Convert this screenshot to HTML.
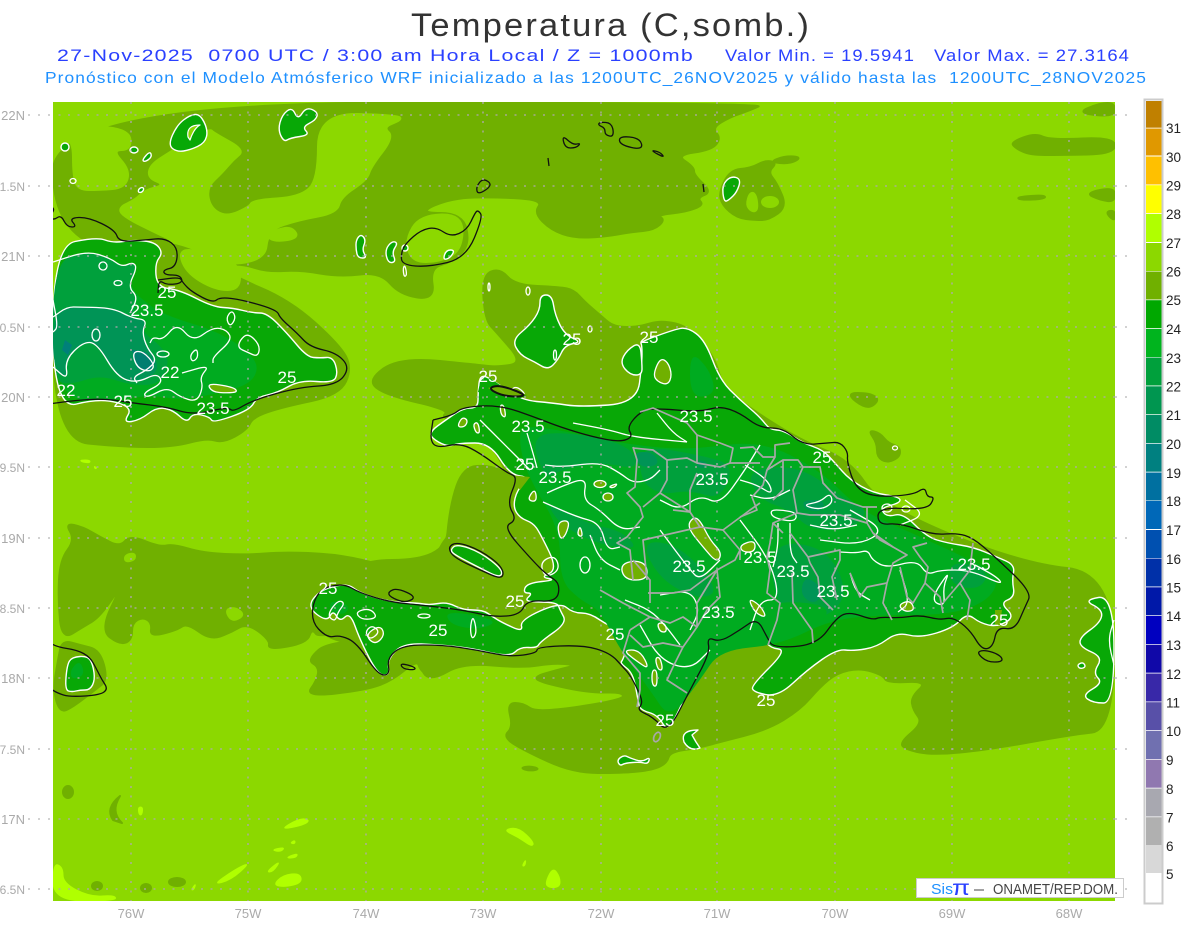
<!DOCTYPE html>
<html><head><meta charset="utf-8"><title>Temperatura</title>
<style>
html,body{margin:0;padding:0;background:#fff}
svg{display:block}
text{font-family:"Liberation Sans",sans-serif}
.d{fill:#70b000;stroke:#70b000;stroke-width:2;stroke-linejoin:round}
.l{fill:#8cd800;stroke:#8cd800;stroke-width:2;stroke-linejoin:round}
.b{fill:#b0ff00;stroke:#b0ff00;stroke-width:1;stroke-linejoin:round}
.g{fill:#08a806;stroke:#fff;stroke-width:1.4;stroke-linejoin:round}
.g2{fill:#00ab20;stroke:none}
.g3{fill:#00a03c;stroke:none}
.g4{fill:#009456;stroke:none}
.o{fill:#70b000;stroke:#fff;stroke-width:1.3;stroke-linejoin:round}
.w{fill:none;stroke:#fff;stroke-width:1.3;stroke-linejoin:round}
.k{fill:none;stroke:#111;stroke-width:1.3;stroke-linejoin:round}
.y{fill:none;stroke:#a8a8a8;stroke-width:1.7;stroke-linejoin:round}
.ax{font-size:13px;fill:#aaa}
.ax2{font-size:12px;fill:#aaa}
.cb{font-size:13.5px;fill:#222}
.lb{font-size:17px;fill:#fff;text-anchor:middle}
</style></head><body>
<svg width="1200" height="927" viewBox="0 0 1200 927" xmlns="http://www.w3.org/2000/svg">
<rect width="1200" height="927" fill="#fff"/>
<text x="411" y="36" font-size="32" fill="#333" letter-spacing="2" textLength="400" lengthAdjust="spacingAndGlyphs">Temperatura (C,somb.)</text>
<text x="57" y="61" font-size="17" fill="#2a40ff" letter-spacing="1" textLength="637" lengthAdjust="spacingAndGlyphs" xml:space="preserve">27-Nov-2025  0700 UTC / 3:00 am Hora Local / Z = 1000mb</text>
<text x="725" y="61" font-size="17" fill="#2a40ff" letter-spacing="1" textLength="190" lengthAdjust="spacingAndGlyphs">Valor Min. = 19.5941</text>
<text x="934" y="61" font-size="17" fill="#2a40ff" letter-spacing="1" textLength="196" lengthAdjust="spacingAndGlyphs">Valor Max. = 27.3164</text>
<text x="45" y="83" font-size="16" fill="#1e90ff" letter-spacing="1" textLength="1102" lengthAdjust="spacingAndGlyphs" xml:space="preserve">Pronóstico con el Modelo Atmósferico WRF inicializado a las 1200UTC_26NOV2025 y válido hasta las  1200UTC_28NOV2025</text>

<svg x="53" y="102" width="1062" height="799" viewBox="53 102 1062 799">
<rect x="53" y="102" width="1062" height="799" fill="#8cd800"/>
<!-- big northern dark -->
<polygon class="d" points="53,102 766,103 751,110 730,117 712,128 721,138 712,150 676,155 694,167 694,175 712,192 697,198 704,205 686,212 657,215 665,220 654,230 632,232 603,237 574,238 551,230 534,213 543,200 497,197 452,198 417,213 463,213 470,245 452,262 430,268 435,300 400,295 380,272 340,277 300,270 267,272 240,263 205,268 176,262 53,240"/>
<polygon class="l" points="53,102 78,102 92,115 88,125 130,130 131,150 112,150 130,170 125,188 100,190 78,190 73,175 73,140 57,135 53,135"/>
<polygon class="l" points="209,128 214,133 245,150 233,160 222,173 207,187 210,207 226,217 249,207 253,200 300,197 318,180 318,113 398,115 402,120 383,127 394,137 371,167 367,180 341,197 337,213 299,220 268,230 265,262 205,265 176,262 172,240 160,235 122,216 119,207 135,200 145,190 165,185 148,178 150,165 170,152"/>
<polygon class="l" points="265,235 290,225 300,238 275,242"/>
<polygon class="l" points="420,215 463,214 462,250 440,262 412,262 405,240"/>
<polygon class="d" points="719,192 730,170 751,168 766,160 777,163 768,172 777,183 787,207 769,220 755,220 737,218 722,205"/>
<polygon class="d" points="769,162 785,156 802,157 790,164"/>
<polygon class="l" points="750,192 756,194 758,210 752,212 746,205"/>
<ellipse cx="770" cy="202" rx="8" ry="5" class="l"/>
<polygon class="d" points="1011,142 1035,133 1050,140 1115,137 1115,154 1060,155 1030,155 1015,148"/>
<polygon class="d" points="1076,113 1100,103 1115,103 1115,117"/>
<polygon class="d" points="1085,193 1115,187 1115,202 1100,200"/>
<polygon class="d" points="1105,212 1115,210 1115,222"/>
<polygon class="d" points="1017,197 1045,195 1045,199 1020,200"/>
<!-- north of Hispaniola / Turks + south sea -->
<polygon class="d" points="482,275 500,268 515,285 560,287 574,290 585,302 600,315 614,327 639,327 661,320 690,327 715,358 722,385 745,405 800,440 850,460 880,505 1020,563 1114,573 1114,730 1070,735 987,750 933,755 907,750 899,743 923,723 913,710 911,697 928,681 887,683 883,675 860,668 837,673 820,687 800,710 767,730 720,742 698,748 670,752 667,763 653,770 623,773 573,773 523,750 503,737 513,727 507,703 523,703 537,713 623,700 623,692 590,693 543,683 533,677 557,670 577,665 553,663 523,668 463,663 433,680 420,672 430,650 300,640 340,560 445,560 450,505 463,467 490,465 510,475 480,430 440,418 450,410 385,395 367,380 400,357 480,365 497,367 523,363 497,333 485,320"/>
<polygon class="d" points="845,393 870,393 880,400 867,410"/>
<polygon class="d" points="868,430 880,433 888,443 900,447 900,457 887,463 877,457 877,443"/>
<!-- Cuba south dark -->
<polygon class="d" points="53,238 180,240 230,275 290,300 340,345 352,368 340,395 283,407 253,417 247,430 223,443 207,438 173,447 123,447 53,440"/>
<polygon class="l" points="178,247 215,255 240,265 240,290 215,290 185,272"/>
<!-- western big dark band -->
<polygon class="d" points="65,523 83,527 100,537 120,547 130,535 160,547 173,544 203,553 247,555 283,552 333,554 373,562 393,570 410,583 440,583 433,563 445,537 460,530 497,533 510,560 470,600 320,640 312,628 307,643 268,650 270,640 247,623 230,633 210,640 187,623 177,630 150,637 152,623 143,617 132,623 132,640 120,645 100,630 123,583 100,617 83,627 62,640 58,600 60,560 75,540"/>
<polygon class="l" points="225,610 235,607 245,615 232,622"/>
<polygon class="l" points="125,555 135,553 135,560 125,562"/>
<!-- Jamaica dark -->
<polygon class="d" points="62,640 80,645 100,650 108,680 95,690 73,707 60,713 53,690 58,660"/>
<!-- south Tiburon dark -->
<polygon class="d" points="307,660 319,667 317,680 305,697 367,690 393,680 417,660 420,670 433,680 460,660 500,665 440,640 330,640"/>
<!-- bottom spots -->
<ellipse cx="68" cy="792" rx="5" ry="6" class="d"/>
<path d="M120,796 Q105,808 113,820 L122,823 Q110,812 120,796Z" class="d"/>
<ellipse cx="97" cy="886" rx="5" ry="4" class="d"/>
<ellipse cx="177" cy="882" rx="8" ry="4" class="d"/>
<ellipse cx="146" cy="888" rx="5" ry="4" class="d"/>
<polygon class="d" points="520,768 530,766 540,769 530,771"/>
<!-- bright patches -->
<polygon class="b" points="279,830 300,818 310,820 304,825"/>
<polygon class="b" points="271,850 285,847 281,852"/>
<polygon class="b" points="285,858 298,853 296,858"/>
<polygon class="b" points="266,872 281,860 273,872"/>
<polygon class="b" points="212,885 239,867 250,863 231,880"/>
<polygon class="b" points="273,885 283,875 300,873 302,883 285,887"/>
<polygon class="b" points="503,830 518,827 534,842 532,847 518,837"/>
<polygon class="b" points="545,883 553,867 560,877 560,887 549,888"/>
<polygon class="b" points="53,863 63,867 63,883 90,897 115,895 116,901 53,901"/>
<polygon class="b" points="138,807 143,807 142,815 139,815"/>
<polygon class="b" points="191,890 196,883 194,890"/>
<polygon class="b" points="290,843 295,840 295,844"/>
<polygon class="b" points="522,866 526,859 525,866"/>
<polygon class="b" points="80,460 90,460 90,463 82,462"/>
<polygon class="b" points="94,466 97,468 95,469"/>
<!-- land 25 contour: Cuba -->
<polygon class="g" points="53,246 97,237 113,243 133,240 155,242 163,253 155,263 157,287 180,290 213,307 233,308 253,313 267,313 287,333 307,357 320,358 333,357 338,373 333,383 300,380 277,393 257,397 250,410 213,423 210,417 193,413 187,423 173,410 157,407 140,420 123,423 133,407 100,398 53,410"/>
<polygon class="g2" points="53,262 87,251 122,267 137,268 128,287 155,310 180,320 213,330 240,345 260,365 250,385 210,395 180,400 150,395 120,400 53,400"/>
<polygon class="g3" points="53,262 87,251 110,258 122,267 133,262 137,268 128,287 138,297 132,318 147,320 142,332 160,345 170,360 160,385 130,385 100,375 70,385 53,380"/>
<polygon class="g4" points="53,317 67,307 80,307 113,308 132,318 147,320 142,332 147,348 157,360 157,373 137,383 117,377 97,343 83,342 65,360 68,380 53,367"/>
<polygon points="132,350 145,352 155,363 150,372 137,368" fill="#007e70"/>
<polygon points="65,340 72,345 68,355 62,350" fill="#00807a"/>
<polyline class="w" points="53,262 87,251 110,258 122,267 133,262 137,268 128,287 138,297 130,313"/>
<polyline class="w" points="53,317 67,307 80,307 113,308 132,318 147,320 142,332 147,348 157,360 147,370 133,377 137,383"/>
<polyline class="w" points="53,367 68,380 65,360 83,342 97,343 117,377 137,383 157,373 163,383 143,393 147,398 167,387 180,397 197,402 203,387 200,377 210,365 182,373"/>
<polyline class="w" points="150,343 153,337 163,340 177,323 193,342 213,327 227,330 232,340 213,357 213,363"/>
<polygon class="w" points="132,352 143,351 155,365 150,372 137,368"/>
<polygon class="w" points="226,318 232,310 236,318 230,327"/>
<polygon class="w" points="240,340 248,333 260,345 258,357 247,352 238,348"/>
<polygon class="w" points="190,355 197,348 198,358 192,362"/>
<ellipse cx="96" cy="335" rx="4" ry="6" class="w"/>
<ellipse cx="163" cy="354" rx="6" ry="3" class="w"/>
<ellipse cx="103" cy="266" rx="4" ry="4" class="w" transform="rotate(30 103 266)"/>
<ellipse cx="118" cy="283" rx="4" ry="2.5" class="w"/>
<polygon class="o" points="207,383 233,387 238,392 227,393 212,392"/>
<polyline class="w" points="53,300 58,327 53,332"/>
<!-- Hispaniola main -->
<polygon class="g" points="432,430 443,422 463,408 478,408 478,392 480,375 490,378 520,400 553,403 580,407 637,403 642,363 642,345 640,342 673,330 687,327 705,340 720,380 740,400 760,417 770,430 783,430 803,443 823,450 835,463 850,480 873,493 900,497 900,503 880,508 887,517 903,513 927,537 947,543 973,547 997,557 1015,565 1012,580 1015,597 1000,603 1015,617 997,627 980,623 967,613 953,628 920,638 897,632 877,647 853,651 837,649 807,670 778,697 753,692 752,685 787,650 770,648 763,637 765,620 755,617 737,630 723,642 710,637 707,657 687,693 668,733 658,715 640,710 638,700 633,673 620,663 623,660 633,630 610,627 590,613 573,613 560,602 520,620 523,632 503,623 493,617 483,610 463,610 447,602 430,605 417,603 390,602 360,593 347,583 320,590 307,607 327,622 333,610 340,622 350,612 360,640 378,675 390,675 387,660 403,643 440,645 470,648 510,657 520,647 537,648 540,642 567,623 560,610 557,602 523,602 533,593 523,593 527,583 557,580 540,577 558,570 540,533 533,523 520,518 513,507 517,490 530,477 510,475 490,443 460,443 447,447 430,437"/>
<polygon class="g" points="620,363 627,350 640,342 642,363 642,375 630,375"/>
<!-- interior greens -->
<polygon class="g2" points="520,425 560,430 630,445 690,450 760,440 820,470 860,510 905,530 960,555 1000,575 990,600 950,615 880,615 830,620 780,645 720,650 700,680 670,720 650,690 620,650 600,610 580,600 560,580 560,530 530,480 520,450"/>
<polygon class="g3" points="530,435 570,432 630,445 640,470 600,462 560,470 545,480"/>
<polygon class="g3" points="640,445 700,455 735,465 720,500 690,490 660,495 640,480"/>
<polygon class="g3" points="745,470 800,465 845,500 870,510 850,530 810,530 790,510 760,500"/>
<polygon class="g3" points="780,540 830,550 850,600 810,625 780,610 770,570"/>
<polygon class="g3" points="950,560 990,570 980,590 950,585"/>
<polygon class="g3" points="640,540 680,545 720,590 700,600 660,580"/>
<polygon class="g3" points="545,500 590,525 620,530 640,550 600,545 560,525"/>
<polygon class="g4" points="633,452 653,452 660,465 640,468"/>
<polygon class="g4" points="697,460 707,462 707,468 697,468"/>
<polygon class="g4" points="802,500 825,500 822,512 805,510"/>
<polygon class="g4" points="805,575 825,590 815,605 800,595"/>
<polygon class="g2" points="330,600 350,605 345,615 330,612"/>
<polygon class="g2" points="445,610 500,620 480,630 450,625"/>
<polygon class="g2" points="690,350 710,370 716,395 690,398"/>
<polygon class="g2" points="800,640 760,600 840,605"/>
<!-- olive holes -->
<polygon class="o" points="653,375 660,358 668,362 672,375 668,385 658,382"/>
<polygon class="o" points="508,395 515,385 527,395 517,397"/>
<polygon class="o" points="457,427 462,417 468,420 465,427"/>
<polygon class="o" points="473,424 478,422 480,433 476,433"/>
<polygon class="o" points="500,405 504,405 506,418 501,415"/>
<polygon class="o" points="527,500 535,488 537,502"/>
<polygon class="o" points="557,522 570,520 566,535 560,540"/>
<polygon class="o" points="577,535 580,525 583,537"/>
<ellipse cx="600" cy="484" rx="6" ry="3.5" class="o"/>
<ellipse cx="608" cy="497" rx="5" ry="4" class="o"/>
<polygon class="o" points="608,487 618,483 614,488"/>
<polygon class="o" points="693,517 687,527 703,547 717,563 722,553 710,540 700,520"/>
<polygon class="o" points="620,565 635,560 647,565 647,580 625,580"/>
<polygon class="o" points="623,650 640,650 650,670 635,660"/>
<polygon class="o" points="652,670 657,670 657,687 652,685"/>
<polygon class="o" points="655,658 660,657 663,670 658,670"/>
<polygon class="o" points="748,598 760,605 767,618 755,613"/>
<polygon class="o" points="657,623 665,623 667,632 660,632"/>
<polygon class="o" points="898,605 910,600 915,610 905,612"/>
<polygon class="o" points="740,545 755,540 755,552 742,552"/>
<polygon class="o" points="365,635 380,625 385,635 375,645"/>
<polygon points="510,475 530,477 520,490" fill="#70b000"/>
<polygon points="995,610 1002,610 1000,625 995,625" fill="#70b000"/>
<polygon class="w" points="355,612 370,608 378,618 362,620"/>
<!-- white inner contours -->
<polyline class="w" points="527,433 533,453 537,468"/>
<polyline class="w" points="545,465 563,467 600,462 620,473 633,483 650,480 660,470"/>
<polyline class="w" points="547,493 560,487 587,477 583,500 600,510 620,530 640,527"/>
<polyline class="w" points="543,502 577,517 600,523 607,550 620,547"/>
<polyline class="w" points="573,423 610,430 633,437 687,442"/>
<polyline class="w" points="657,413 673,433 687,442"/>
<polyline class="w" points="660,500 680,510 700,495 720,505 745,470 760,445"/>
<polyline class="w" points="740,480 757,485 773,495 768,480 745,465"/>
<polygon class="w" points="770,510 783,510 797,513 795,522 773,518"/>
<polygon class="w" points="802,505 820,502 830,493 833,503 820,510"/>
<polyline class="w" points="810,525 833,530 857,525"/>
<polyline class="w" points="778,523 778,547 773,567"/>
<polyline class="w" points="790,523 790,553 797,563"/>
<polyline class="w" points="840,552 857,553 868,550 872,560 887,568 917,560 927,575 940,570 970,570 1003,585 997,577 975,565"/>
<polyline class="w" points="850,573 856,592 870,600"/>
<polyline class="w" points="900,570 910,603 898,612"/>
<polygon class="w" points="943,587 950,570 930,600 945,607"/>
<polyline class="w" points="660,530 690,570 700,580 720,560"/>
<polyline class="w" points="625,600 650,610 665,625 680,645"/>
<polyline class="w" points="640,625 660,660 690,670 710,650"/>
<polyline class="w" points="740,520 770,560 780,600 760,600 750,630"/>
<polyline class="w" points="820,540 860,545 885,530 850,510"/>
<polyline class="w" points="480,420 500,440 530,470"/>
<polyline class="w" points="590,535 600,560 620,570"/>
<polyline class="w" points="660,595 690,590 700,610 690,630"/>
<polyline class="w" points="900,525 925,515 905,500"/>
<polyline class="w" points="750,495 770,500 790,490"/>
<polygon class="w" points="365,632 372,625 380,632 370,640"/>
<polygon class="w" points="327,615 338,600 345,603 338,612 335,622"/>
<ellipse cx="424" cy="616" rx="6" ry="2" class="w"/>
<polygon class="w" points="470,628 473,615 477,632 472,640"/>
<ellipse cx="887" cy="508" rx="5" ry="4" class="w"/>
<ellipse cx="906" cy="509" rx="4" ry="3" class="w"/>
<polygon class="w" points="540,562 555,555 560,570 545,578"/>
<ellipse cx="585" cy="565" rx="5" ry="8" class="w"/>
<!-- Gonave, Tortuga etc -->
<polygon class="g" points="450,550 457,544 480,552 503,570 500,578 480,568 455,555"/>
<polygon points="478,392 480,383 490,378 500,385 527,395 517,400 490,395" style="fill:#08a806"/>
<polygon points="488,388 500,385 527,395 517,397 500,395" style="fill:#70b000"/>
<!-- Turks blob -->
<polygon class="g" points="512,340 530,325 540,310 540,295 552,295 555,315 565,335 582,342 565,345 558,360 548,370 535,362 520,355"/>
<ellipse cx="590" cy="329" rx="2" ry="3" class="w"/>
<ellipse cx="555" cy="355" rx="1.5" ry="5" class="w"/>
<!-- top blobs -->
<polygon class="g" points="168,145 177,125 190,115 200,114 208,130 205,143 190,150 177,152"/>
<path d="M188,137 Q186,125 200,125 Q194,128 190,140Z" class="w" style="stroke-width:1.2;fill:#8cd800"/>
<polygon class="g" points="282,115 292,107 298,120 306,107 318,112 316,120 302,127 310,135 290,138 284,142 278,130"/>
<ellipse cx="65" cy="147" rx="4" ry="4" class="g"/>
<ellipse cx="134" cy="150" rx="4" ry="3" class="g"/>
<polygon class="g" points="142,160 150,151 152,157 145,162"/>
<ellipse cx="73" cy="181" rx="3" ry="2.5" class="w"/>
<ellipse cx="141" cy="190" rx="3" ry="2" class="g" transform="rotate(-40 141 190)"/>
<polygon class="g" points="356,240 361,234 366,240 362,250 367,258 358,258 356,250"/>
<polygon class="g" points="385,250 392,241 398,243 392,252 396,262 388,263"/>
<ellipse cx="405" cy="248" rx="3" ry="3" class="g"/>
<polygon class="w" points="403,268 405,265 407,275 404,277"/>
<polygon class="g" points="443,260 446,250 455,250 450,258"/>
<polygon class="g" points="722,185 731,176 741,179 737,192 729,200 724,202"/>
<ellipse cx="895" cy="448" rx="2.5" ry="2" class="w"/>
<ellipse cx="489" cy="287" rx="1" ry="4" class="w"/>
<ellipse cx="528" cy="291" rx="2" ry="4" class="w"/>
<!-- Jamaica green, SE blobs -->
<polygon class="g" points="65,690 67,665 72,657 88,656 93,665 95,680 90,690 80,690 72,692"/>
<polygon class="g2" points="70,670 80,660 85,675 72,680"/>
<path d="M698,730 Q680,730 684,742 Q690,752 700,748 L696,742 L692,735Z" class="g"/>
<polygon class="g" points="617,760 624,755 630,758 642,762 650,757 648,764 640,762 625,763 620,766"/>
<polygon class="g" points="1114,595 1083,600 1103,610 1100,623 1080,637 1080,647 1103,657 1093,673 1103,683 1082,695 1093,703 1114,703"/>
<polyline class="w" points="1114,620 1108,640 1114,665"/>
<polygon class="g" points="1077,665 1083,662 1086,667 1080,669"/>
<!-- black coast -->
<polyline class="k" points="34,203 50,205 55,210 48,217 54,220 61,215 67,227 77,227 69,218 88,217 115,230 119,242 145,240 165,238 178,248 176,267 163,270 165,275 180,275 183,283 167,285 159,280 158,293"/>
<polyline class="k" points="158,280 180,277 183,283 192,292 213,303 220,297 243,300 277,310 280,318 297,333 310,347 337,353 350,368 337,385 300,387 253,400 233,412 228,407 193,415 167,407 133,403 100,398 53,403 35,407"/>
<polygon class="k" points="476,187 483,178 493,185 478,195"/>
<polygon class="k" points="478,210 483,217 466,258 429,267 402,265 401,253 406,243 421,230 436,227 451,237 467,230 475,213"/>
<polygon class="k" points="598,125 600,122 612,123 614,137 605,135 605,128"/>
<polygon class="k" points="619,136 640,138 643,150 620,145"/>
<polygon class="k" points="650,150 665,158 660,152"/>
<polygon class="k" points="562,135 573,145 581,143 576,148 565,148"/>
<polyline class="k" points="548,158 549,166"/>
<polyline class="k" points="703,184 704,192"/>
<polyline class="k" points="433,420 453,415 463,407 500,405 537,418 560,427 593,437 620,442 633,437 627,427 640,412 653,408 700,412 720,406 740,413 760,428 783,428 803,445 827,443 840,442 848,452 847,462 855,487 873,497 913,495 925,487 927,497 935,497 927,510 878,507 878,525 900,523 933,535 957,533 973,538 993,555 1032,592 1025,607 1015,630 997,627 993,647 982,650 970,630 953,617 940,620 920,615 900,618 880,617 873,620 850,612 837,617 817,645 773,648 767,637 757,618 740,630 720,642 707,637 710,653 690,690 668,733 653,717 637,710 643,703 638,690 630,675 623,667 610,653 583,645 537,647 537,653 510,657 477,650 443,645 403,645 387,658 390,675 378,675 357,643 340,635 327,638 310,620 317,590 343,583 360,593 390,602 420,605 463,610 493,617 520,615 527,600 557,602 560,583 547,575 532,560 503,527 517,520 507,503 518,477 507,473 480,453 460,443 437,448 430,440 433,420"/>
<polygon class="k" points="982,650 977,653 987,662 1002,662 1002,657 993,652"/>
<polygon class="k" points="448,547 457,542 480,550 503,567 503,580 480,570 453,557"/>
<polygon class="k" points="488,388 500,385 527,395 517,397 500,395" style="stroke-width:2"/>
<polyline class="k" points="40,641 47,641 57,647 77,650 90,657 97,670 102,680 108,689 100,695 70,697 57,693 48,687 40,687"/>
<polygon class="k" points="388,592 397,588 417,597 405,603 390,597"/>
<polygon class="k" points="400,663 415,667 415,670 403,669"/>
<!-- gray provinces -->
<polyline class="y" points="633,447 637,460 635,487 627,493 640,507 643,517 627,537 617,543 630,550 633,580"/>
<polyline class="y" points="633,448 653,450 667,460 667,480 660,493 643,507"/>
<polyline class="y" points="667,460 687,458 697,463 697,435 687,423 653,408 640,412"/>
<polyline class="y" points="697,435 720,443 733,448 730,463 760,463"/>
<polyline class="y" points="697,463 720,467 730,463"/>
<polyline class="y" points="660,493 690,512 673,510"/>
<polyline class="y" points="690,490 697,473"/>
<polyline class="y" points="690,490 690,512 700,527 723,530 750,510 760,503"/>
<polyline class="y" points="700,527 643,540 647,580"/>
<polyline class="y" points="723,530 740,550 740,560"/>
<polyline class="y" points="740,448 753,447 763,457 775,457 775,445 790,443"/>
<polyline class="y" points="775,457 767,470 763,485 752,497 757,510 740,517"/>
<polyline class="y" points="767,470 783,460 798,460 803,467 820,467 823,483 837,498 863,507 877,507"/>
<polyline class="y" points="783,460 783,490 773,500"/>
<polyline class="y" points="803,467 793,490 797,513 810,515 840,515 867,523 873,533 893,547 907,555 893,563 887,583 883,603 892,620"/>
<polyline class="y" points="867,507 867,523"/>
<polyline class="y" points="797,513 773,523 783,533"/>
<polyline class="y" points="773,523 770,543 767,557 770,570 767,593 780,603 777,620 768,645"/>
<polyline class="y" points="790,533 808,557 810,563 818,577 820,597 833,610"/>
<polyline class="y" points="808,557 840,550 840,560 832,577 837,600"/>
<polyline class="y" points="792,573 793,603 812,630 813,643"/>
<polyline class="y" points="850,573 860,597 867,587 887,583"/>
<polyline class="y" points="900,567 907,597 913,603 925,583 928,567 920,557 913,547 927,543"/>
<polyline class="y" points="925,583 940,597 943,613"/>
<polyline class="y" points="973,543 970,570 960,583 943,603"/>
<polyline class="y" points="960,583 970,600 967,620"/>
<polyline class="y" points="893,547 880,540 873,533"/>
<polyline class="y" points="630,630 623,653 640,673 640,690 637,707"/>
<ellipse cx="657" cy="737" rx="3" ry="5" transform="rotate(25 657 737)" class="y"/>
<polyline class="y" points="600,590 623,603 650,617 630,630"/>
<polyline class="y" points="650,603 650,580 633,560"/>
<polyline class="y" points="648,593 673,593 690,590 717,570"/>
<polyline class="y" points="650,617 670,623 683,617 697,627 683,647 663,643 643,647 630,635"/>
<polyline class="y" points="697,627 697,603 717,570 720,597 707,610 697,627"/>
<polyline class="y" points="683,647 673,667 667,680 687,693"/>
<polyline class="y" points="717,570 735,560 740,550"/>
<!-- graticule -->
<g stroke="#b0a8b0" stroke-width="1.3" stroke-dasharray="2 7.5" fill="none">
<path d="M30,115H1135M30,186H1135M30,256H1135M30,327H1135M30,397H1135M30,467H1135M30,538H1135M30,608H1135M30,678H1135M30,749H1135M30,819H1135M30,889H1135"/>
<path d="M131,102V901M248,102V901M366,102V901M483,102V901M601,102V901M717,102V901M835,102V901M952,102V901M1069,102V901"/>
</g>
<!-- labels -->
<text class="lb" x="167" y="298">25</text><text class="lb" x="147" y="316">23.5</text><text class="lb" x="170" y="378">22</text><text class="lb" x="66" y="396">22</text><text class="lb" x="123" y="407">25</text><text class="lb" x="213" y="414">23.5</text><text class="lb" x="287" y="383">25</text><text class="lb" x="572" y="345">25</text><text class="lb" x="649" y="343">25</text><text class="lb" x="488" y="382">25</text><text class="lb" x="528" y="432">23.5</text><text class="lb" x="696" y="422">23.5</text><text class="lb" x="525" y="470">25</text><text class="lb" x="555" y="483">23.5</text><text class="lb" x="712" y="485">23.5</text><text class="lb" x="822" y="463">25</text><text class="lb" x="836" y="526">23.5</text><text class="lb" x="760" y="563">23.5</text><text class="lb" x="793" y="577">23.5</text><text class="lb" x="974" y="570">23.5</text><text class="lb" x="689" y="572">23.5</text><text class="lb" x="833" y="597">23.5</text><text class="lb" x="718" y="618">23.5</text><text class="lb" x="515" y="607">25</text><text class="lb" x="328" y="594">25</text><text class="lb" x="438" y="636">25</text><text class="lb" x="615" y="640">25</text><text class="lb" x="999" y="626">25</text><text class="lb" x="766" y="706">25</text><text class="lb" x="665" y="726">25</text>
</svg>
<!-- graticule outside map -->
<g stroke="#b8b8b8" stroke-width="1.2" stroke-dasharray="2 8" fill="none">
<path d="M28,115H53M28,186H53M28,256H53M28,327H53M28,397H53M28,467H53M28,538H53M28,608H53M28,678H53M28,749H53M28,819H53M28,889H53"/>
<path d="M1115,115H1135M1115,186H1135M1115,256H1135M1115,327H1135M1115,397H1135M1115,467H1135M1115,538H1135M1115,608H1135M1115,678H1135M1115,749H1135M1115,819H1135M1115,889H1135"/>
</g>
<!-- left axis -->
<g text-anchor="end">
<text class="ax" x="25" y="120">22N</text><text class="ax2" x="25" y="191">1.5N</text><text class="ax" x="25" y="261">21N</text><text class="ax2" x="25" y="332">0.5N</text><text class="ax" x="25" y="402">20N</text><text class="ax2" x="25" y="472">9.5N</text><text class="ax" x="25" y="543">19N</text><text class="ax2" x="25" y="613">8.5N</text><text class="ax" x="25" y="683">18N</text><text class="ax2" x="25" y="754">7.5N</text><text class="ax" x="25" y="824">17N</text><text class="ax2" x="25" y="894">6.5N</text>
</g>
<g text-anchor="middle">
<text class="ax" x="131" y="918">76W</text><text class="ax" x="248" y="918">75W</text><text class="ax" x="366" y="918">74W</text><text class="ax" x="483" y="918">73W</text><text class="ax" x="601" y="918">72W</text><text class="ax" x="717" y="918">71W</text><text class="ax" x="835" y="918">70W</text><text class="ax" x="952" y="918">69W</text><text class="ax" x="1069" y="918">68W</text>
</g>
<!-- legend box -->
<rect x="916.5" y="878.5" width="207" height="19" fill="#fff" stroke="#ccc" stroke-width="1"/>
<text x="931" y="894" font-size="15" fill="#1e90ff" textLength="22" lengthAdjust="spacingAndGlyphs">Sis</text>
<text x="952" y="895" font-size="21" fill="#2a40ff" textLength="18" lengthAdjust="spacingAndGlyphs">π</text>
<text x="974" y="894" font-size="15" fill="#444" textLength="10" lengthAdjust="spacingAndGlyphs">–</text>
<text x="993" y="894" font-size="14.5" fill="#444" textLength="125" lengthAdjust="spacingAndGlyphs">ONAMET/REP.DOM.</text>
<!-- colorbar -->
<rect x="1144.5" y="99.5" width="18" height="804" fill="#fff" stroke="#ccc" stroke-width="2"/>
<g>
<rect x="1146" y="101" width="15.5" height="26.7" fill="#c08000"/>
<rect x="1146" y="128.5" width="15.5" height="27" fill="#e09800"/>
<rect x="1146" y="156.5" width="15.5" height="28" fill="#ffc000"/>
<rect x="1146" y="185.2" width="15.5" height="28" fill="#ffff00"/>
<rect x="1146" y="214" width="15.5" height="28" fill="#b0ff00"/>
<rect x="1146" y="243" width="15.5" height="28" fill="#8cd800"/>
<rect x="1146" y="271.5" width="15.5" height="28" fill="#70b000"/>
<rect x="1146" y="300.2" width="15.5" height="28" fill="#00a800"/>
<rect x="1146" y="329" width="15.5" height="28" fill="#00b41e"/>
<rect x="1146" y="357.5" width="15.5" height="28" fill="#00a03c"/>
<rect x="1146" y="386.3" width="15.5" height="28" fill="#009650"/>
<rect x="1146" y="415" width="15.5" height="28" fill="#008c64"/>
<rect x="1146" y="443.7" width="15.5" height="28" fill="#008080"/>
<rect x="1146" y="472.5" width="15.5" height="28" fill="#0070a0"/>
<rect x="1146" y="501" width="15.5" height="28" fill="#0068b8"/>
<rect x="1146" y="530" width="15.5" height="28" fill="#0050b0"/>
<rect x="1146" y="558.5" width="15.5" height="28" fill="#0030a8"/>
<rect x="1146" y="587.3" width="15.5" height="28" fill="#0018a8"/>
<rect x="1146" y="616" width="15.5" height="28" fill="#0000c0"/>
<rect x="1146" y="644.7" width="15.5" height="28" fill="#1008a8"/>
<rect x="1146" y="673.5" width="15.5" height="28" fill="#3828a8"/>
<rect x="1146" y="702.2" width="15.5" height="28" fill="#5850a8"/>
<rect x="1146" y="731" width="15.5" height="28" fill="#7070b0"/>
<rect x="1146" y="759.7" width="15.5" height="28" fill="#9078b0"/>
<rect x="1146" y="788.5" width="15.5" height="28" fill="#a8a8b0"/>
<rect x="1146" y="817.2" width="15.5" height="28" fill="#b0b0b0"/>
<rect x="1146" y="845" width="15.5" height="28" fill="#d8d8d8"/>
<rect x="1146" y="873.5" width="15.5" height="28" fill="#fff"/>
</g>
<g>
<text class="cb" x="1166" y="133">31</text><text class="cb" x="1166" y="162">30</text><text class="cb" x="1166" y="190.5">29</text><text class="cb" x="1166" y="219">28</text><text class="cb" x="1166" y="248">27</text><text class="cb" x="1166" y="276.5">26</text><text class="cb" x="1166" y="305">25</text><text class="cb" x="1166" y="334">24</text><text class="cb" x="1166" y="363">23</text><text class="cb" x="1166" y="391.5">22</text><text class="cb" x="1166" y="420">21</text><text class="cb" x="1166" y="449">20</text><text class="cb" x="1166" y="478">19</text><text class="cb" x="1166" y="506">18</text><text class="cb" x="1166" y="535">17</text><text class="cb" x="1166" y="564">16</text><text class="cb" x="1166" y="592.5">15</text><text class="cb" x="1166" y="621">14</text><text class="cb" x="1166" y="650">13</text><text class="cb" x="1166" y="679">12</text><text class="cb" x="1166" y="707.5">11</text><text class="cb" x="1166" y="736">10</text><text class="cb" x="1166" y="765">9</text><text class="cb" x="1166" y="794">8</text><text class="cb" x="1166" y="822.5">7</text><text class="cb" x="1166" y="851">6</text><text class="cb" x="1166" y="879">5</text>
</g>
</svg>
<script>
(function(){
var NS="http://www.w3.org/2000/svg";
var els=document.querySelectorAll("polygon.d,polygon.l,polygon.b,polygon.g,polygon.o,polygon.w,polyline.w,polygon.k,polyline.k,polygon.g2,polygon.g3,polygon.g4");
for(var i=0;i<els.length;i++){
  var el=els[i],n=el.getAttribute("points").trim().split(/\s+/).map(function(s){return s.split(",").map(Number)});
  if(n.length<3)continue;
  var closed=el.tagName.toLowerCase()==="polygon",d="",mid=function(a,b){return ((a[0]+b[0])/2)+","+((a[1]+b[1])/2)};
  if(closed){
    d="M"+mid(n[n.length-1],n[0]);
    for(var j=0;j<n.length;j++){d+="Q"+n[j][0]+","+n[j][1]+" "+mid(n[j],n[(j+1)%n.length])}
    d+="Z";
  }else{
    d="M"+n[0][0]+","+n[0][1]+"L"+mid(n[0],n[1]);
    for(var k=1;k<n.length-1;k++){d+="Q"+n[k][0]+","+n[k][1]+" "+mid(n[k],n[k+1])}
    d+="L"+n[n.length-1][0]+","+n[n.length-1][1];
  }
  var p=document.createElementNS(NS,"path");
  p.setAttribute("d",d);
  p.setAttribute("class",el.getAttribute("class"));
  if(el.getAttribute("style"))p.setAttribute("style",el.getAttribute("style"));
  el.parentNode.replaceChild(p,el);
}
})();
</script>
</body></html>
